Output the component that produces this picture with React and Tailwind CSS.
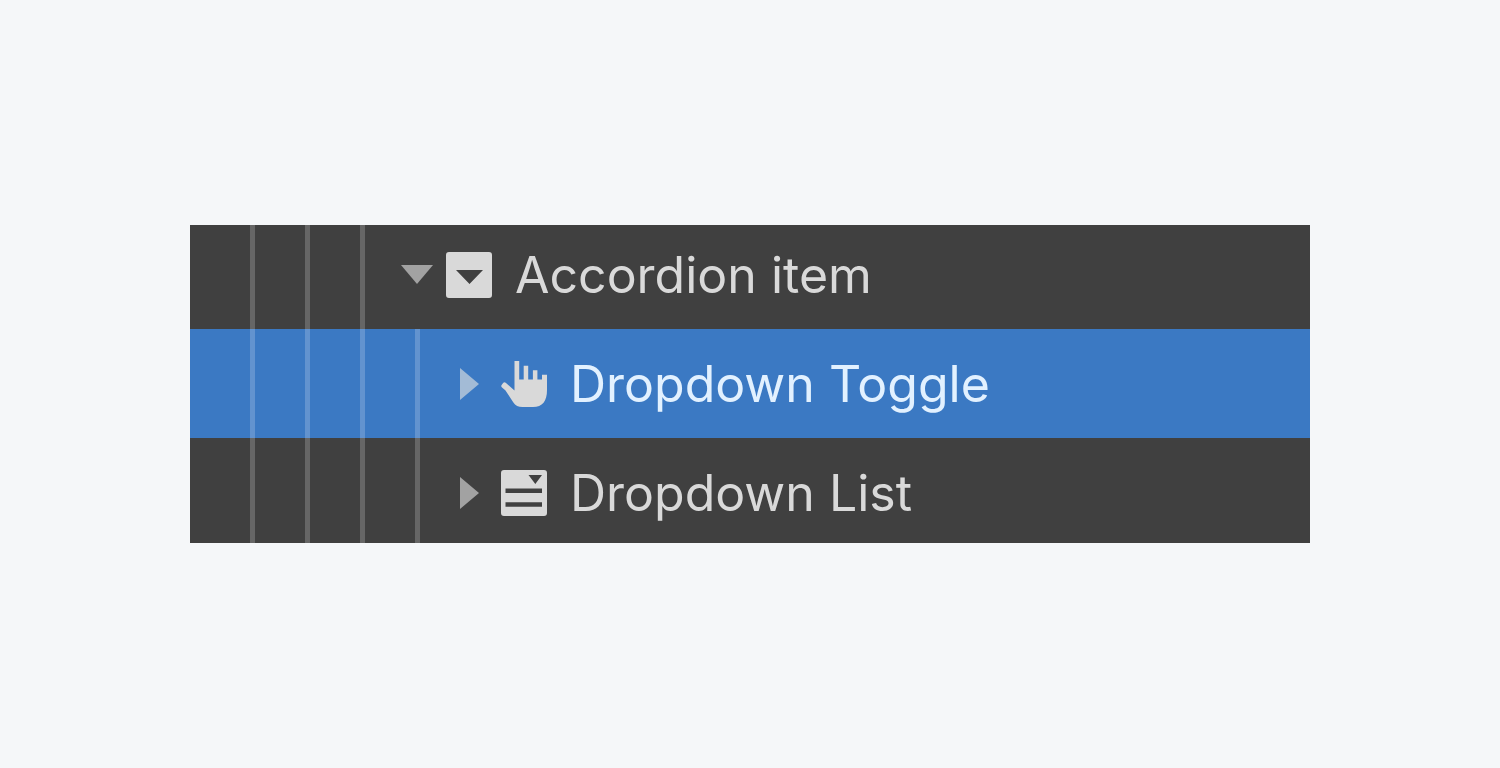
function Guides({ count }) {
  return (
    <span aria-hidden="true" className="flex shrink-0 self-stretch gap-[50px] pl-[60px]">
      {Array.from({ length: count }, (_, i) => (
        <span key={i} className="w-[5px] bg-white/20" />
      ))}
    </span>
  );
}

function Arrow({ open }) {
  return (
    <svg viewBox="0 0 32 32" className="size-8" fill="currentColor" aria-hidden="true">
      {open ? <path d="M0 6h32L16 25z" /> : <path d="M4 0v32L23 16z" />}
    </svg>
  );
}

function DropdownIcon() {
  return (
    <svg viewBox="0 0 46 46" className="size-[46px] shrink-0" fill="#d9d9d9" aria-hidden="true">
      <path
        fillRule="evenodd"
        d="M3 0h40a3 3 0 0 1 3 3v40a3 3 0 0 1-3 3H3a3 3 0 0 1-3-3V3a3 3 0 0 1 3-3zM10 18 23.500 32 37 18z"
      />
    </svg>
  );
}

function HandIcon() {
  return (
    <svg viewBox="0 0 46 46" className="size-[46px] shrink-0" fill="#d9d9d9" aria-hidden="true">
      <path d="M13.500 0h4.700v18.500h4.500V4.800h4.500v13.700h4.700V9.200h4.500v9.300h4.600V13.800H46V29c0 11-4.500 17-14 17H21.500c-4.200 0-7-1.500-9.300-4.800L4.300 29.200 1 26.400c-1-.9-1-1.800-.2-2.700l1.300-1.700c.8-.9 1.700-1 2.600-.2l8.800 7.700z" />
    </svg>
  );
}

function ListIcon() {
  return (
    <svg viewBox="0 0 46 46" className="size-[46px] shrink-0" fill="#d9d9d9" aria-hidden="true">
      <path
        fillRule="evenodd"
        d="M3 0h40a3 3 0 0 1 3 3v40a3 3 0 0 1-3 3H3a3 3 0 0 1-3-3V3a3 3 0 0 1 3-3zM27.500 5 34.300 14 41 5zM4.500 18.500v4.500H41v-4.500zM4.500 32.300v4.500H41v-4.500z"
      />
    </svg>
  );
}

function Row({ depth, open, selected, icon, label, rowClass, contentClass }) {
  return (
    <li
      role="treeitem"
      aria-level={depth}
      aria-expanded={open}
      aria-selected={selected}
      className={`flex items-center ${rowClass}`}
    >
      <Guides count={depth} />
      <div className={`flex min-w-0 items-center pl-9 ${contentClass}`}>
        <button
          type="button"
          aria-label={`${open ? "Collapse" : "Expand"} ${label}`}
          className={selected ? "text-[#a3bbd6]" : "text-[#a2a2a2]"}
        >
          <Arrow open={open} />
        </button>
        <span className="ml-[13px] flex items-center gap-[23px]">
          {icon}
          <span className="text-[50px] leading-[60px] whitespace-nowrap">{label}</span>
        </span>
      </div>
    </li>
  );
}

export default function App() {
  return (
    <main className="flex min-h-screen items-center bg-[#f5f7f9] px-[190px] font-['Inter',sans-serif]">
      <ul role="tree" aria-label="Navigator" className="w-full overflow-hidden bg-[#404040]">
        <Row
          depth={3}
          open={true}
          selected={false}
          icon={<DropdownIcon />}
          label="Accordion item"
          rowClass="h-[104px] text-[#d9d9d9]"
          contentClass="pb-1"
        />
        <Row
          depth={4}
          open={false}
          selected={true}
          icon={<HandIcon />}
          label="Dropdown Toggle"
          rowClass="h-[109px] bg-[#3b79c3] text-[#e2f1ff]"
          contentClass=""
        />
        <Row
          depth={4}
          open={false}
          selected={false}
          icon={<ListIcon />}
          label="Dropdown List"
          rowClass="h-[105px] text-[#d9d9d9]"
          contentClass="pt-1"
        />
      </ul>
    </main>
  );
}
